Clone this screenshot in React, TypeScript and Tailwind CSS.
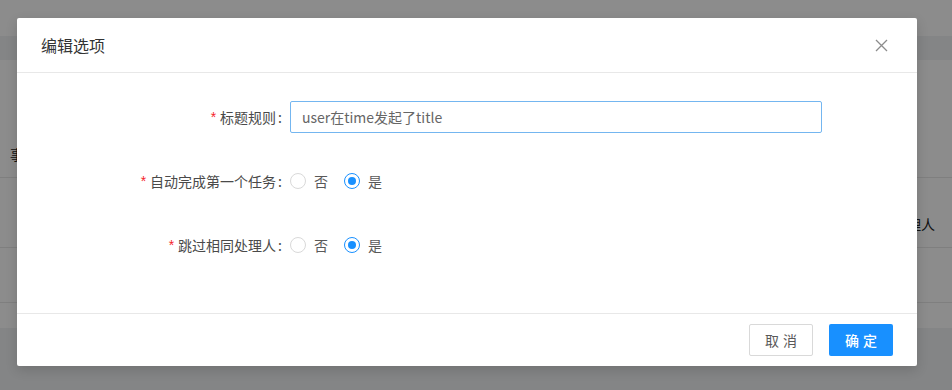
import React from "react";

interface radioRowType {
    rowId: number,
    label: string,
    value: boolean,
}

const radioRows: radioRowType[] = [
    {rowId: 0, label: '自动完成第一个任务', value: true},
    {rowId: 1, label: '跳过相同处理人', value: true},
]

function Label(props: {text: string}) {
    return (
        <div className="w-[249px] shrink-0 flex justify-end items-center text-[14px] text-[#4a4a4a]">
            <span className="text-[#f5222d] mr-[4px] text-[14px] font-['Liberation_Sans',sans-serif]">*</span>
            <span>{props.text}</span>
            <span className="ml-[2px] mr-[8px]">:</span>
        </div>
    )
}

function Radio(props: {checked: boolean, text: string}) {
    return (
        <label className="flex items-center mr-[8px]">
            <span className={"w-[16px] h-[16px] rounded-full border flex items-center justify-center bg-white " + (props.checked ? "border-[#1890ff]" : "border-[#d9d9d9]")}>
                {props.checked && <span className="w-[8px] h-[8px] rounded-full bg-[#1890ff]"></span>}
            </span>
            <span className="px-[8px] text-[14px] text-[#595959]">{props.text}</span>
        </label>
    )
}

function Modal() {
    return (
        <div className="w-[900px] h-[348px] bg-white rounded-[2px] shadow-[0_4px_12px_rgba(0,0,0,0.15)] flex flex-col">
            <div className="h-[55px] shrink-0 border-b border-[#e8e8e8] flex items-center justify-between pl-[24px] pr-[29px]">
                <span className="text-[16px] text-[#333] leading-[22px]">编辑选项</span>
                <svg width="13" height="13" viewBox="0 0 13 13" className="mt-[1px]">
                    <path d="M1 1 L12 12 M12 1 L1 12" stroke="#8c8c8c" strokeWidth="1.3" fill="none" />
                </svg>
            </div>
            <div className="flex-1 flex flex-col gap-[24px] p-[24px]">
                <div className="flex items-center h-[40px]">
                    <Label text="标题规则" />
                    <div className="w-[532px] h-[32px] border border-[#74b6f0] rounded-[2px] flex items-center px-[11px] text-[14px] text-[#666]">
                        user在time发起了title
                    </div>
                </div>
                {radioRows.map(row => (
                    <div className="flex items-center h-[40px]" key={row.rowId}>
                        <Label text={row.label} />
                        <Radio checked={!row.value} text="否" />
                        <Radio checked={row.value} text="是" />
                    </div>
                ))}
            </div>
            <div className="h-[53px] shrink-0 border-t border-[#e8e8e8] flex items-center justify-end gap-[16px] px-[24px]">
                <button className="w-[64px] h-[32px] border border-[#d9d9d9] rounded-[2px] bg-white text-[14px] text-[#595959] tracking-[4px] pl-[4px]">取消</button>
                <button className="w-[64px] h-[32px] rounded-[2px] bg-[#1890ff] text-[14px] text-white font-medium tracking-[4px] pl-[4px]">确定</button>
            </div>
        </div>
    )
}

export default function App() {
    return (
        <div className="relative w-[952px] h-[390px] overflow-hidden bg-white font-['Noto_Sans_CJK_SC','Noto_Sans',sans-serif]">
            {/* page under the mask */}
            <div className="flex flex-col">
                <div className="h-[36px]"></div>
                <div className="h-[24px] bg-[#f0f2f5]"></div>
                <div className="h-[118px] border-b border-[#e8e8e8] flex items-end pb-[12px] pl-[10px] text-[14px] text-[#222]">事项名称</div>
                <div className="h-[70px] border-b border-[#e8e8e8] flex justify-end items-start pt-[36px] pr-[17px] text-[14px] text-[#222]">处理人</div>
                <div className="h-[55px] border-b border-[#e8e8e8]"></div>
                <div className="h-[25px]"></div>
                <div className="h-[62px] bg-[#f0f2f5]"></div>
            </div>
            <div className="absolute inset-0 bg-[rgba(0,0,0,0.45)] pl-[17px] pt-[18px]">
                <Modal />
            </div>
        </div>
    )
}
